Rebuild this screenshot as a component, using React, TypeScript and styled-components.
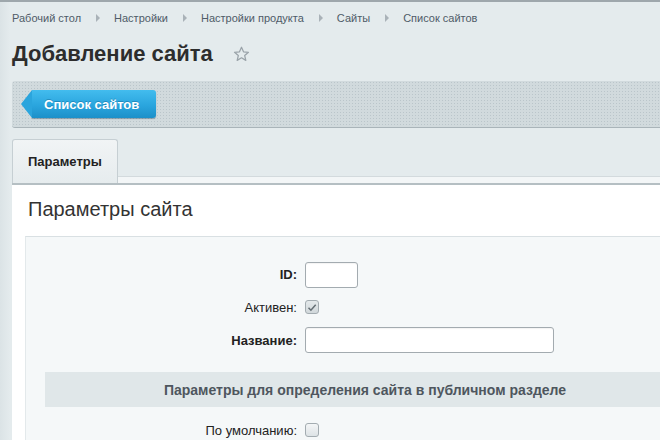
import React from 'react';
import styled, { createGlobalStyle } from 'styled-components';

const GlobalStyle = createGlobalStyle`
    html, body {
        margin: 0;
        padding: 0;
        overflow: hidden;
        background: #e4ebed;
        font-family: "Liberation Sans", Arial, sans-serif;
    }
`;

const Page = styled.div`
    width: 685px;
    height: 440px;
    border-top: 2px solid #9ea7ac;
    background: linear-gradient(to right, #dbe3e6 0, #e4ebed 10px);
    padding-left: 12px;
    box-sizing: border-box;
    overflow: hidden;
`;

const Breadcrumbs = styled.div`
    display: flex;
    align-items: center;
    height: 32px;
    font-size: 11px;
    color: #4f5b68;
`;

const Crumb = styled.span`
    white-space: nowrap;
`;

const CrumbArrow = styled.span`
    width: 0;
    height: 0;
    margin: 0 14px 0 15px;
    border-top: 4px solid transparent;
    border-bottom: 4px solid transparent;
    border-left: 4px solid #a9b2b8;
`;

const TitleRow = styled.div`
    display: flex;
    align-items: center;
    gap: 20px;
    height: 40px;
`;

const Title = styled.h1`
    margin: 0;
    font-size: 22px;
    font-weight: bold;
    color: #2d2d2d;
`;

const Toolbar = styled.div`
    display: flex;
    align-items: center;
    height: 46px;
    margin-top: 7px;
    padding-left: 9px;
    border-radius: 3px 0 0 3px;
    border-bottom: 1px solid #a9b4b9;
    background-color: #d1dadd;
    background-image: radial-gradient(circle, #bac5ca 0.7px, transparent 0.8px);
    background-size: 3px 3px;
`;

const BackButton = styled.button`
    position: relative;
    height: 28px;
    margin-left: 11px;
    padding: 0 17px 0 12px;
    border: none;
    border-radius: 0 3px 3px 0;
    background: linear-gradient(to bottom, #43bcee 0%, #2aa5de 55%, #1c90c9 100%);
    box-shadow: 0 1px 1px rgba(0, 50, 80, 0.35);
    color: #fff;
    font-family: "Liberation Sans", Arial, sans-serif;
    font-size: 13px;
    font-weight: bold;
    text-shadow: 0 -1px 0 rgba(0, 60, 100, 0.3);

    &::before {
        content: '';
        position: absolute;
        left: -11px;
        top: 0;
        width: 0;
        height: 0;
        border-top: 14px solid transparent;
        border-bottom: 14px solid transparent;
        border-right: 11px solid #2ba5dd;
    }
`;

const TabBar = styled.div`
    display: flex;
    align-items: flex-end;
    margin-top: 11px;
    border-bottom: 2px solid #b5bfc3;
`;

const Tab = styled.div`
    display: flex;
    align-items: center;
    height: 44px;
    padding: 0 15px;
    box-sizing: border-box;
    border: 1px solid #c6cfd3;
    border-bottom: none;
    border-radius: 3px 3px 0 0;
    background: linear-gradient(to bottom, #f1f4f5, #e6ecee);
    font-size: 13px;
    font-weight: bold;
    color: #222;
`;

const TabFiller = styled.div`
    flex: 1;
    height: 6px;
    border-top: 1px solid #d3dadd;
    background: #f3f6f7;
`;

const Content = styled.div`
    background: #fff;
    padding: 0 0 0 13px;
    height: 260px;
`;

const SectionTitle = styled.h2`
    margin: 0;
    padding: 13px 0 0 3px;
    height: 38px;
    font-size: 20px;
    font-weight: normal;
    color: #333;
`;

const Panel = styled.div`
    background: #f5f8f9;
    border-top: 1px solid #d9e0e3;
    border-left: 1px solid #e3e9eb;
    padding: 21px 0 0 19px;
    height: 300px;
`;

const FormGrid = styled.div`
    display: grid;
    grid-template-columns: 252px 1fr;
    column-gap: 8px;
    align-items: center;
`;

const Label = styled.label<{ $bold?: boolean }>`
    text-align: right;
    font-size: 13px;
    color: #222;
    font-weight: ${(p) => (p.$bold ? 'bold' : 'normal')};
`;

const Field = styled.div<{ $h: number }>`
    display: flex;
    align-items: center;
    height: ${(p) => p.$h}px;
`;

const TextInput = styled.input<{ $w: number }>`
    width: ${(p) => p.$w}px;
    height: 26px;
    box-sizing: border-box;
    border: 1px solid #a3abb0;
    border-radius: 3px;
    background: #fff;
    box-shadow: inset 0 1px 1px rgba(0, 0, 0, 0.05);
    outline: none;
`;

const CheckBox = styled.span<{ $checked?: boolean }>`
    display: flex;
    align-items: center;
    justify-content: center;
    width: 14px;
    height: 14px;
    box-sizing: border-box;
    border: 1px solid #a3acb1;
    border-radius: 3px;
    background: ${(p) =>
        p.$checked ? 'linear-gradient(to bottom, #e4e9eb, #d1d8db)' : 'linear-gradient(to bottom, #f4f6f7, #dde3e6)'};
`;

const GroupHeader = styled.div`
    display: flex;
    align-items: center;
    justify-content: center;
    height: 35px;
    margin: 15px 0 7px;
    background: #e0e7e9;
    font-size: 14px;
    font-weight: bold;
    color: #4e565e;
`;

const Star = () => (
    <svg width="17" height="16" viewBox="0 0 24 23">
        <path
            d="M12 1.8l2.9 6.6 7.1.6-5.4 4.7 1.6 7-6.2-3.7-6.2 3.7 1.6-7L2 9l7.1-.6z"
            fill="none"
            stroke="#9aa3a9"
            strokeWidth="1.8"
            strokeLinejoin="round"
        />
    </svg>
);

const Check = () => (
    <svg width="10" height="9" viewBox="0 0 10 9">
        <path d="M1.5 4.8l2.4 2.4L8.7 1.8" fill="none" stroke="#646e74" strokeWidth="1.5" />
    </svg>
);

const crumbs = ['Рабочий стол', 'Настройки', 'Настройки продукта', 'Сайты', 'Список сайтов'];

const App: React.FC = () => {
    return (
        <Page>
            <GlobalStyle />
            <Breadcrumbs>
                {crumbs.map((c, i) => (
                    <React.Fragment key={c}>
                        {i > 0 && <CrumbArrow />}
                        <Crumb>{c}</Crumb>
                    </React.Fragment>
                ))}
            </Breadcrumbs>
            <TitleRow>
                <Title>Добавление сайта</Title>
                <Star />
            </TitleRow>
            <Toolbar>
                <BackButton>Список сайтов</BackButton>
            </Toolbar>
            <TabBar>
                <Tab>Параметры</Tab>
                <TabFiller />
            </TabBar>
            <Content>
                <SectionTitle>Параметры сайта</SectionTitle>
                <Panel>
                    <FormGrid>
                        <Label $bold>ID:</Label>
                        <Field $h={33}>
                            <TextInput $w={53} />
                        </Field>
                        <Label>Активен:</Label>
                        <Field $h={32}>
                            <CheckBox $checked>
                                <Check />
                            </CheckBox>
                        </Field>
                        <Label $bold>Название:</Label>
                        <Field $h={34}>
                            <TextInput $w={249} />
                        </Field>
                    </FormGrid>
                    <GroupHeader>Параметры для определения сайта в публичном разделе</GroupHeader>
                    <FormGrid>
                        <Label>По умолчанию:</Label>
                        <Field $h={32}>
                            <CheckBox />
                        </Field>
                    </FormGrid>
                </Panel>
            </Content>
        </Page>
    );
};

export default App;
